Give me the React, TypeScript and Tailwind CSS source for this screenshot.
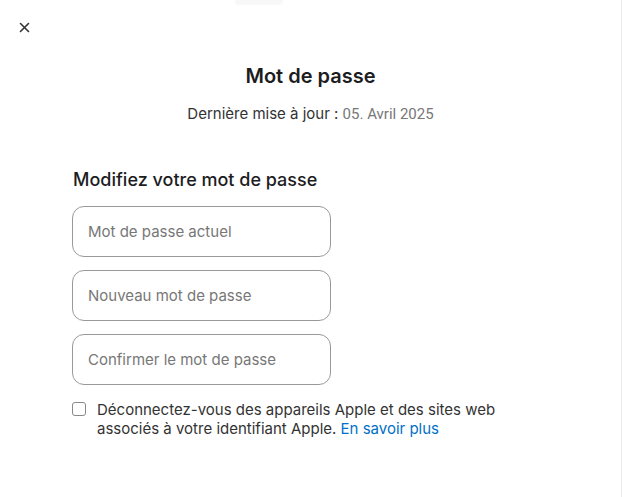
import React from 'react';

const font = { fontFamily: 'Inter, "Noto Sans", sans-serif' };

const fields = ['Mot de passe actuel', 'Nouveau mot de passe', 'Confirmer le mot de passe'];

export default function App() {
  return (
    <div className="relative w-[622px] h-[497px] bg-white border-r border-[#ececec] font-[Inter,sans-serif] text-[#1d1d1f]">
      {/* close */}
      <button className="absolute left-[17px] top-[20px] w-[14px] h-[14px] flex items-center justify-center text-[#333]">
        <svg width="11" height="11" viewBox="0 0 11 11" fill="none" stroke="currentColor" strokeWidth="1.6" strokeLinecap="round">
          <path d="M1.5 1.5 9.5 9.5M9.5 1.5 1.5 9.5" />
        </svg>
      </button>
      <div className="absolute left-[235px] top-0 w-[48px] h-[5px] rounded-b bg-[#f8f8f8]" />

      <div className="flex flex-col pt-[63px] px-[72px]">
        <h1 className="text-center text-[20px] leading-[26px] font-semibold text-[#1d1d1f]">Mot de passe</h1>
        <p className="mt-[15px] text-center text-[15px] leading-[20px] text-[#333]">
          Dernière mise à jour : <span className="font-[Roboto,sans-serif] text-[15px] text-[#777]">05. Avril 2025</span>
        </p>

        <h2 className="mt-[44px] ml-[1px] text-[18px] leading-[24px] font-medium text-[#1d1d1f]">
          Modifiez votre mot de passe
        </h2>

        <div className="mt-[14px] flex flex-col gap-[13px]">
          {fields.map((f) => (
            <input
              key={f}
              type="password"
              placeholder={f}
              className="w-[259px] h-[51px] rounded-[12px] border border-[#999] px-[15px] text-[15px] placeholder:text-[#777] outline-none"
              style={font}
            />
          ))}
        </div>

        <label className="mt-[15px] flex items-start gap-[11px] text-[15px] leading-[19px] text-[#333]">
          <span className="mt-[2px] w-[14px] h-[14px] shrink-0 rounded-[3px] border border-[#888] bg-white" />
          <span>
            Déconnectez-vous des appareils Apple et des sites web
            <br />
            associés à votre identifiant Apple. <span className="text-[#0070c9]">En savoir plus</span>
          </span>
        </label>
      </div>
    </div>
  );
}
